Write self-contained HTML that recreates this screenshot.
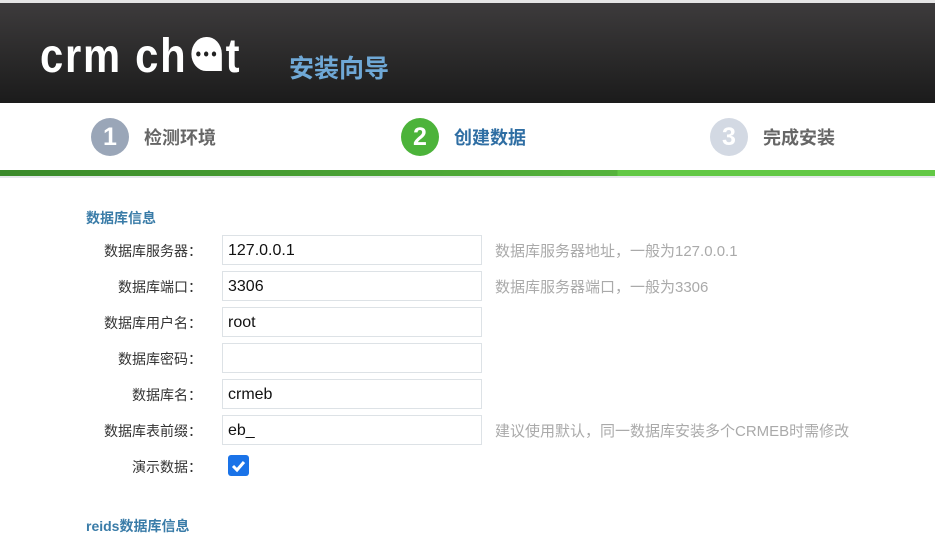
<!DOCTYPE html>
<html><head><meta charset="utf-8"><style>
*{margin:0;padding:0;box-sizing:border-box}
body{width:935px;height:526px;overflow:hidden;background:#fff;font-family:"Liberation Sans","Noto Sans CJK SC",sans-serif;position:relative}
.top{position:absolute;left:0;top:0;width:935px;height:3px;background:#e6e6e6}
.hd{position:absolute;left:0;top:3px;width:935px;height:100px;background:linear-gradient(#3d3b3c,#1b1b1b)}
.logo{position:absolute;left:40px;top:28px;color:#fff;font-size:48px;font-weight:bold;font-family:"Liberation Sans",sans-serif;line-height:48px;transform:scaleX(0.87);transform-origin:0 0;white-space:nowrap;letter-spacing:2px}
.sub{position:absolute;left:289px;top:46px;color:#6fa8d6;font-size:25px;font-weight:bold}
.step{position:absolute;top:118px;height:38px;display:flex;align-items:center}
.c{width:38px;height:38px;border-radius:50%;color:#fff;font-size:25px;font-weight:bold;text-align:center;line-height:38px;margin-right:15px}
.st{font-size:18px;font-weight:bold}
.bar{position:absolute;top:170px;left:0;width:935px;height:6px;background:linear-gradient(90deg,#3a8a2a,#55b33c 617px,#62c845 618px,#62c845)}
.line{position:absolute;top:176px;left:0;width:935px;height:2px;background:#e4e8ea}
h3{position:absolute;left:86px;font-size:14px;color:#3a7ca8;font-weight:bold}
.row{position:absolute;left:0;height:30px;width:935px}
.lb{position:absolute;right:733px;top:6px;font-size:14px;color:#333;white-space:nowrap}
.in{position:absolute;left:222px;top:0;width:260px;height:30px;border:1px solid #dde2e6;font-size:16px;color:#111;padding:6px 5px}
.hint{position:absolute;left:495px;top:5px;font-size:15px;color:#aaa;white-space:nowrap}
.cb{position:absolute;left:228px;top:3px;width:21px;height:21px;background:#1a73e8;border-radius:3px}
</style></head><body>
<div class="top"></div>
<div class="hd">
<div class="logo">crm ch<svg width="44" height="44" viewBox="0 0 40 44" style="vertical-align:-3px"><path d="M20 6a17 17 0 1 0 0 34h18V23A17 17 0 0 0 20 6z" fill="#fff"/><circle cx="11" cy="23" r="2.5" fill="#222"/><circle cx="20" cy="23" r="2.5" fill="#222"/><circle cx="29" cy="23" r="2.5" fill="#222"/></svg>t</div>
<div class="sub">安装向导</div>
</div>
<div class="step" style="left:91px"><div class="c" style="background:#9aa6b8">1</div><span class="st" style="color:#666">检测环境</span></div>
<div class="step" style="left:401px"><div class="c" style="background:#4cb33a">2</div><span class="st" style="color:#2f6ea3">创建数据</span></div>
<div class="step" style="left:710px"><div class="c" style="background:#d3d9e3">3</div><span class="st" style="color:#666">完成安装</span></div>
<div class="bar"></div><div class="line"></div>
<h3 style="top:208px">数据库信息</h3>
<div class="row" style="top:235px"><span class="lb">数据库服务器：</span><div class="in">127.0.0.1</div><span class="hint">数据库服务器地址，一般为127.0.0.1</span></div>
<div class="row" style="top:271px"><span class="lb">数据库端口：</span><div class="in">3306</div><span class="hint">数据库服务器端口，一般为3306</span></div>
<div class="row" style="top:307px"><span class="lb">数据库用户名：</span><div class="in">root</div></div>
<div class="row" style="top:343px"><span class="lb">数据库密码：</span><div class="in"></div></div>
<div class="row" style="top:379px"><span class="lb">数据库名：</span><div class="in">crmeb</div></div>
<div class="row" style="top:415px"><span class="lb">数据库表前缀：</span><div class="in">eb_</div><span class="hint">建议使用默认，同一数据库安装多个CRMEB时需修改</span></div>
<div class="row" style="top:452px"><span class="lb" style="top:5px">演示数据：</span><div class="cb"><svg width="21" height="21" viewBox="0 0 21 21"><path d="M5 11l4 4 7-8" stroke="#fff" stroke-width="3" fill="none"/></svg></div></div>
<h3 style="top:516px">reids数据库信息</h3>
</body></html>
